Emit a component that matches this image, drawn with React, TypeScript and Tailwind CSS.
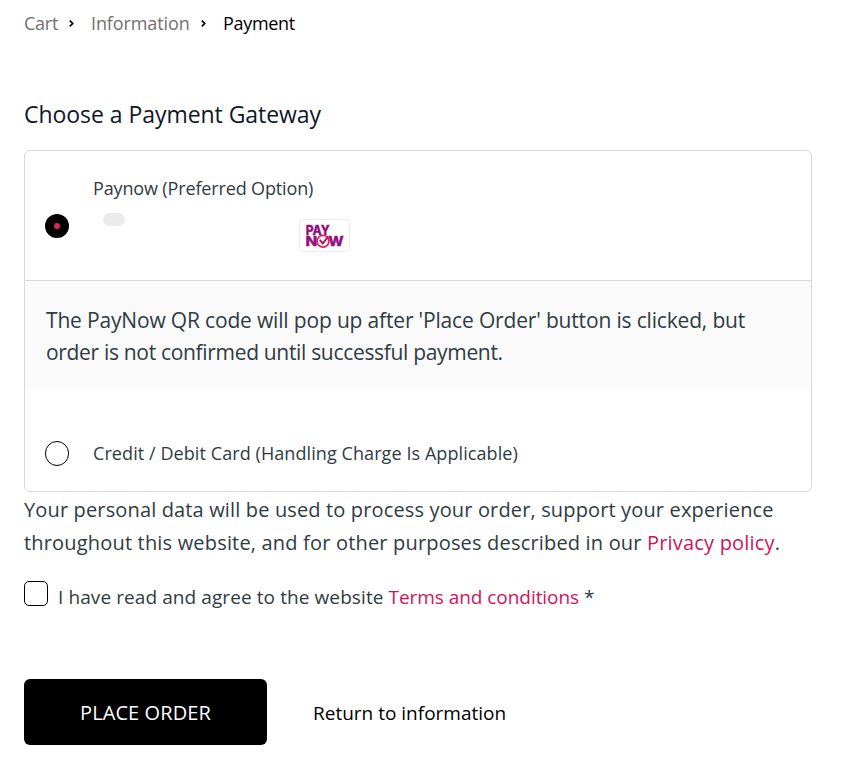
/**
 * PaymentStep — last step of the checkout: gateway choice, terms and order button
 */

import { useState } from 'react'
import type { ReactNode } from 'react'

type Gateway = 'paynow' | 'card'

function Chevron() {
  return (
    <svg className="h-[7px] w-[5px]" viewBox="0 0 5 7" fill="none" stroke="#000" strokeWidth="1.7">
      <path d="M0.8 0.7 3.7 3.5 0.8 6.3" />
    </svg>
  )
}

function PayNowLogo() {
  return (
    <svg className="block h-[33px] w-[51px]" viewBox="0 0 51 33">
      <rect x="0.5" y="0.5" width="50" height="32" rx="3.5" fill="#fff" stroke="#ebebeb" />
      <text fill="#93117e" stroke="#93117e" strokeWidth="0.3" fontFamily="Inter, sans-serif" fontWeight="800" fontSize="13.4">
        <tspan x="6.8" y="15.6" textLength="24" lengthAdjust="spacingAndGlyphs">PAY</tspan>
        <tspan x="6.6" y="27.3" textLength="11.8" lengthAdjust="spacingAndGlyphs">N</tspan>
        <tspan x="29.2" y="27.3" textLength="15.4" lengthAdjust="spacingAndGlyphs">W</tspan>
      </text>
      <circle cx="24" cy="22.3" r="5.9" fill="#fff" stroke="#e0245e" strokeWidth="1.7" />
      <path d="M20.8 21 23.8 24.4 29.2 17.6" fill="none" stroke="#b01a6e" strokeWidth="2" />
    </svg>
  )
}

interface GatewayRadioProps {
  checked: boolean
  onSelect: () => void
}

function GatewayRadio({ checked, onSelect }: GatewayRadioProps) {
  return (
    <button
      type="button"
      role="radio"
      aria-checked={checked}
      onClick={onSelect}
      className={
        checked
          ? 'flex size-6 shrink-0 items-center justify-center rounded-full bg-black'
          : 'h-[25px] w-6 shrink-0 rounded-full border border-black bg-white'
      }
    >
      {checked && <span className="size-1.5 rounded-full bg-[#e0245e]" />}
    </button>
  )
}

function PinkLink({ children }: { children: ReactNode }) {
  return <a className="text-[#d3125c]" href="#">{children}</a>
}

export default function App() {
  const [gateway, setGateway] = useState<Gateway>('paynow')
  const [agreed, setAgreed] = useState(false)

  return (
    <main className="h-[771px] w-[841px] overflow-hidden bg-white pl-6 font-['Open_Sans',sans-serif] text-[#2f3b43]">
      <nav className="flex h-[47px] items-center text-[18px] whitespace-nowrap text-[#707070]">
        <a className="w-[45px] tracking-[-0.25px]" href="#">Cart</a>
        <Chevron />
        <a className="ml-[17px] w-[110px] tracking-[-0.1px]" href="#">Information</a>
        <Chevron />
        <span className="ml-[17px] tracking-[-0.3px] text-black">Payment</span>
      </nav>

      <h2 className="mt-[50px] h-[53px] text-[23px] leading-[34px] tracking-[-0.05px] whitespace-nowrap text-[#0f172a]">
        Choose a Payment Gateway
      </h2>

      <section className="h-[342px] w-[788px] overflow-hidden rounded-md border border-[#d9d9d9]" role="radiogroup">
        <div className="flex h-[130px] border-b border-[#d9d9d9] pl-5">
          <div className="pt-[63px]">
            <GatewayRadio checked={gateway === 'paynow'} onSelect={() => setGateway('paynow')} />
          </div>
          <div className="pt-6 pl-6 text-[18px] leading-[27px] whitespace-nowrap">
            <div className="tracking-[-0.14px]">Paynow (Preferred Option)</div>
            <div className="flex items-start pl-[10px]">
              <span className="mt-[11px] h-[13px] w-[22px] rounded-full bg-[#ebebeb]" />
              <div className="mt-[17px] ml-[174px]">
                <PayNowLogo />
              </div>
            </div>
          </div>
        </div>

        <div className="h-[108px] bg-[#fafafa] pt-[23px] pl-[21px] text-[21px] leading-8 whitespace-nowrap">
          <p className="tracking-[-0.17px]">
            The PayNow QR code will pop up after 'Place Order' button is clicked, but
          </p>
          <p className="tracking-[-0.32px]">order is not confirmed until successful payment.</p>
        </div>

        <div className="flex items-center pt-[51px] pl-5">
          <GatewayRadio checked={gateway === 'card'} onSelect={() => setGateway('card')} />
          <span className="pl-6 text-[18px] leading-[27px] tracking-[0.08px] whitespace-nowrap">
            Credit / Debit Card (Handling Charge Is Applicable)
          </span>
        </div>
      </section>

      <div className="pt-px text-[20px] leading-[33px] whitespace-nowrap">
        <p className="tracking-[0.145px]">
          Your personal data will be used to process your order, support your experience
        </p>
        <p className="tracking-[0.18px]">
          throughout this website, and for other purposes described in our{' '}
          <PinkLink>Privacy policy</PinkLink>.
        </p>
      </div>

      <div className="mt-[22px] flex h-[33px] whitespace-nowrap">
        <button
          type="button"
          role="checkbox"
          aria-checked={agreed}
          onClick={() => setAgreed(!agreed)}
          className="h-[25px] w-6 shrink-0 rounded-[5px] border border-black bg-white"
        >
          {agreed ? '✓' : ''}
        </button>
        <span className="ml-[10px] text-[19px] leading-[33px] tracking-[-0.05px]">
          <span className="tracking-[0.09px]">I have read and agree to the website </span>
          <PinkLink>Terms and conditions</PinkLink> *
        </span>
      </div>

      <div className="mt-[65px] flex items-center text-[19px] whitespace-nowrap">
        <button type="button" className="h-[66px] w-[243px] rounded-md bg-black pt-0.5 text-[20px] tracking-[0.1px] text-white">
          PLACE ORDER
        </button>
        <a className="ml-[46px] pt-0.5 text-black" href="#">Return to information</a>
      </div>
    </main>
  )
}
